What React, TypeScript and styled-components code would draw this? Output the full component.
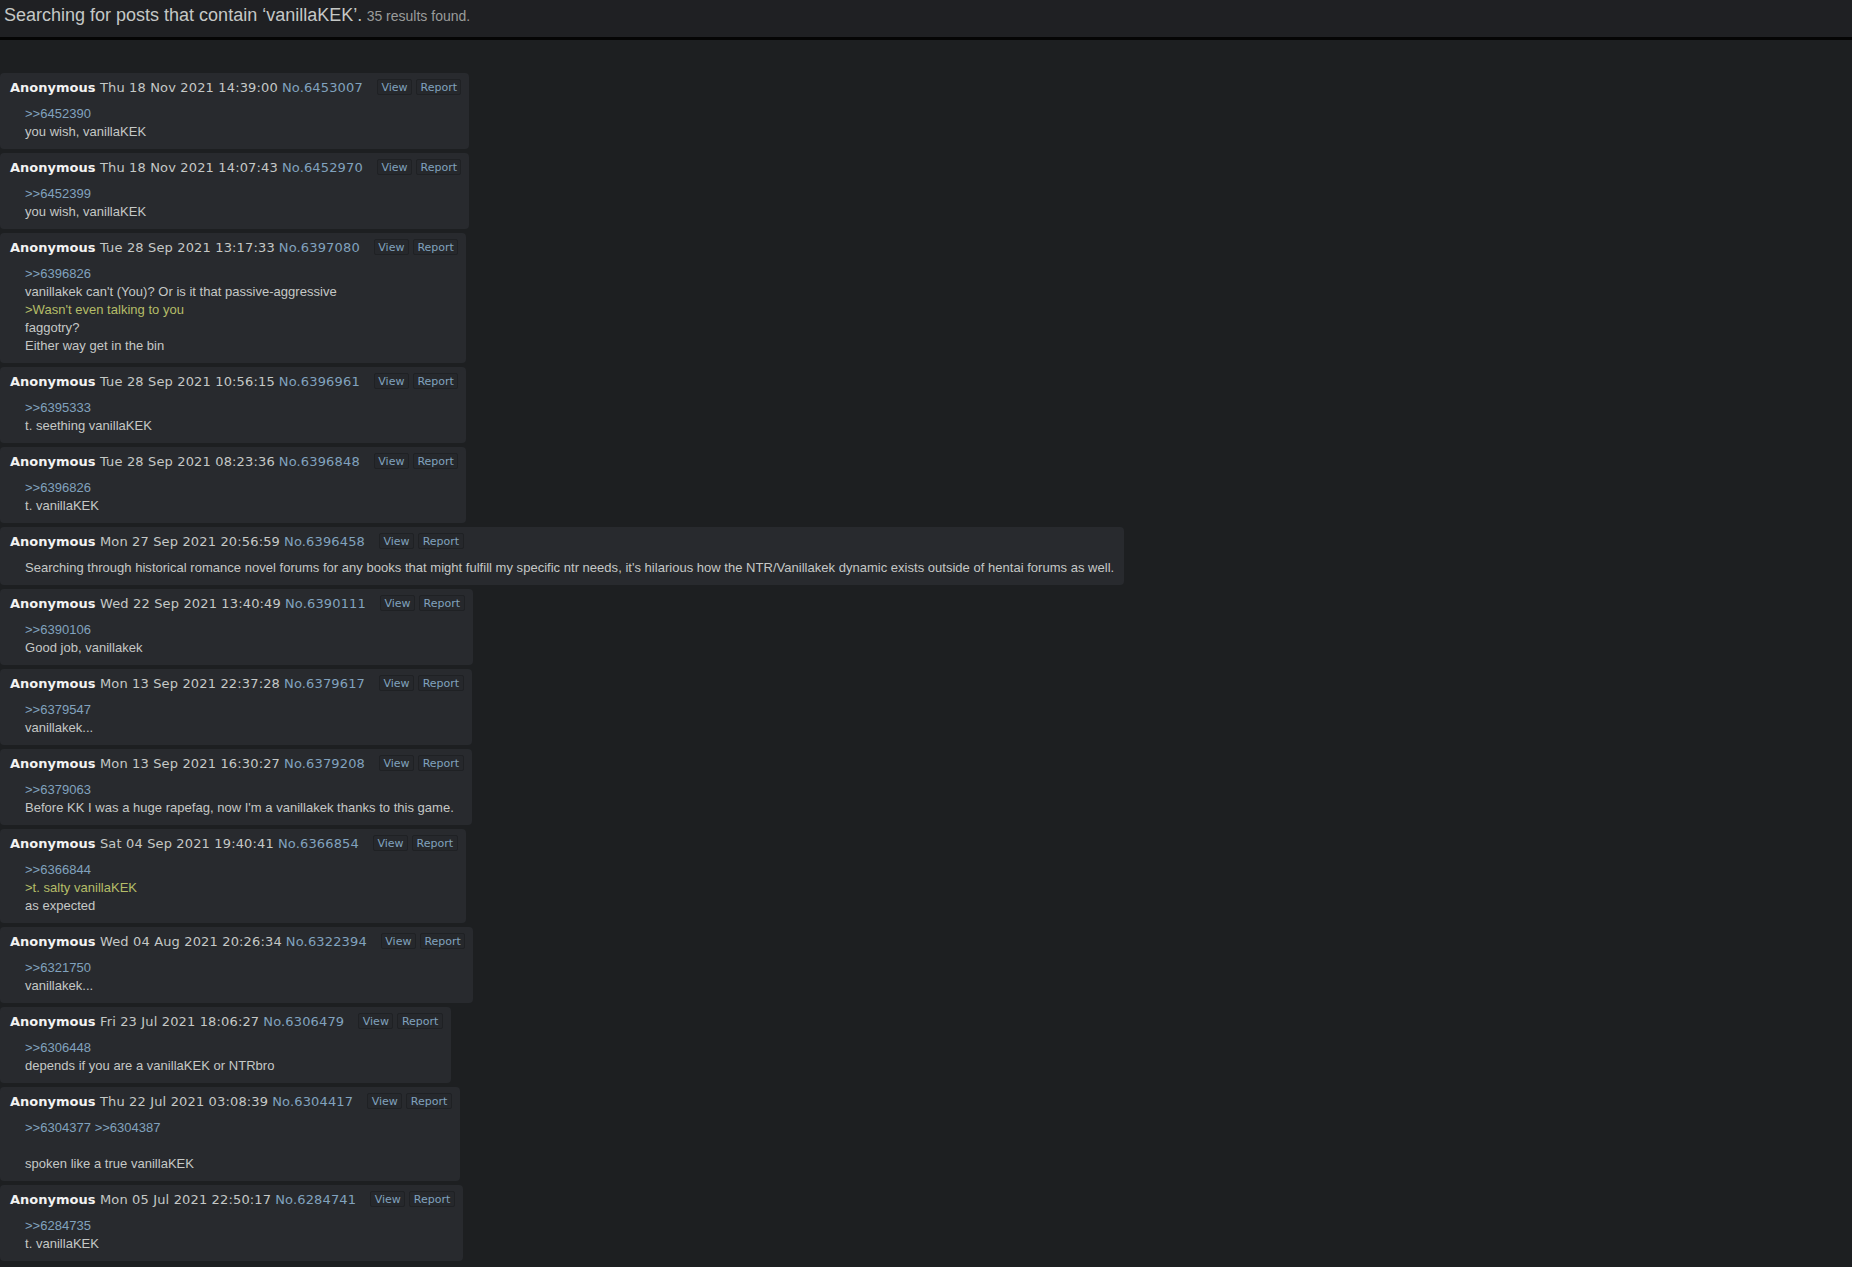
import React from "react";
import styled, { createGlobalStyle } from "styled-components";

const GlobalStyle = createGlobalStyle`
  html, body {
    margin: 0;
    padding: 0;
    background: #1d1f21;
  }
  body {
    font-family: "Liberation Sans", Arial, sans-serif;
    color: #c5c8c6;
  }
`;

const Page = styled.div`
  min-height: 1267px;
  background: #1d1f21;
`;

const TopBar = styled.header`
  height: 40px;
  box-sizing: border-box;
  padding: 5px 4px 0;
  background: #1f2023;
  border-bottom: 3px solid #050505;
  white-space: nowrap;
`;

const Title = styled.span`
  font-family: "Liberation Sans", Arial, sans-serif;
  font-size: 18px;
  color: #c5c8c6;
`;

const Count = styled.span`
  font-family: "Liberation Sans", Arial, sans-serif;
  font-size: 14px;
  color: #9a9c9b;
`;

const PostList = styled.main`
  display: flex;
  flex-direction: column;
  align-items: flex-start;
  gap: 4px;
  padding-top: 33px;
`;

const Post = styled.article`
  background: #282a2e;
  border-radius: 4px;
  padding: 5px 8px 8px 10px;
`;

const PostHeader = styled.div`
  display: flex;
  align-items: center;
  height: 18px;
  font-family: "DejaVu Sans", Verdana, sans-serif;
  font-size: 13px;
  white-space: nowrap;
`;

const Name = styled.span`
  font-weight: bold;
  color: #f2f2f2;
`;

const DateText = styled.span`
  color: #c5c8c6;
  margin-left: 4.5px;
  letter-spacing: 0.15px;
`;

const PostNo = styled.a`
  color: #81a2be;
  text-decoration: none;
  margin-left: 4px;
  letter-spacing: 0.15px;
`;

const Controls = styled.div`
  display: flex;
  gap: 4px;
  margin-left: 14px;
`;

const Btn = styled.a`
  display: inline-flex;
  align-items: center;
  height: 16px;
  box-sizing: border-box;
  padding: 0 3.5px;
  border: 1px solid #1f2124;
  border-radius: 2px;
  background: #26282c;
  color: #81a2be;
  font-family: "DejaVu Sans", Verdana, sans-serif;
  font-size: 11px;
  text-decoration: none;
`;

const Body = styled.div`
  margin: 9px 0 0 15px;
  padding-right: 2px;
  font-family: "Liberation Sans", Arial, sans-serif;
  font-size: 13px;
  line-height: 18px;
  letter-spacing: 0.02px;
  color: #c5c8c6;
  white-space: nowrap;
`;

const Line = styled.div`
  min-height: 18px;
`;

const QuoteLink = styled.a`
  color: #81a2be;
  text-decoration: none;
`;

const Green = styled.span`
  color: #b5bd68;
`;

type PostData = {
  date: string;
  no: string;
  lines: string[];
};

const posts: PostData[] = [
  { date: "Thu 18 Nov 2021 14:39:00", no: "6453007", lines: [">>6452390", "you wish, vanillaKEK"] },
  { date: "Thu 18 Nov 2021 14:07:43", no: "6452970", lines: [">>6452399", "you wish, vanillaKEK"] },
  {
    date: "Tue 28 Sep 2021 13:17:33",
    no: "6397080",
    lines: [
      ">>6396826",
      "vanillakek can't (You)? Or is it that passive-aggressive",
      ">Wasn't even talking to you",
      "faggotry?",
      "Either way get in the bin",
    ],
  },
  { date: "Tue 28 Sep 2021 10:56:15", no: "6396961", lines: [">>6395333", "t. seething vanillaKEK"] },
  { date: "Tue 28 Sep 2021 08:23:36", no: "6396848", lines: [">>6396826", "t. vanillaKEK"] },
  {
    date: "Mon 27 Sep 2021 20:56:59",
    no: "6396458",
    lines: [
      "Searching through historical romance novel forums for any books that might fulfill my specific ntr needs, it's hilarious how the NTR/Vanillakek dynamic exists outside of hentai forums as well.",
    ],
  },
  { date: "Wed 22 Sep 2021 13:40:49", no: "6390111", lines: [">>6390106", "Good job, vanillakek"] },
  { date: "Mon 13 Sep 2021 22:37:28", no: "6379617", lines: [">>6379547", "vanillakek..."] },
  {
    date: "Mon 13 Sep 2021 16:30:27",
    no: "6379208",
    lines: [">>6379063", "Before KK I was a huge rapefag, now I'm a vanillakek thanks to this game."],
  },
  {
    date: "Sat 04 Sep 2021 19:40:41",
    no: "6366854",
    lines: [">>6366844", ">t. salty vanillaKEK", "as expected"],
  },
  { date: "Wed 04 Aug 2021 20:26:34", no: "6322394", lines: [">>6321750", "vanillakek..."] },
  {
    date: "Fri 23 Jul 2021 18:06:27",
    no: "6306479",
    lines: [">>6306448", "depends if you are a vanillaKEK or NTRbro"],
  },
  {
    date: "Thu 22 Jul 2021 03:08:39",
    no: "6304417",
    lines: [">>6304377 >>6304387", "", "spoken like a true vanillaKEK"],
  },
  { date: "Mon 05 Jul 2021 22:50:17", no: "6284741", lines: [">>6284735", "t. vanillaKEK"] },
];

function renderLine(text: string, i: number) {
  if (text.startsWith(">>")) {
    const parts = text.split(" ");
    return (
      <Line key={i}>
        {parts.map((p, j) => (
          <React.Fragment key={j}>
            {j > 0 && " "}
            <QuoteLink href="#">{p}</QuoteLink>
          </React.Fragment>
        ))}
      </Line>
    );
  }
  if (text.startsWith(">")) {
    return (
      <Line key={i}>
        <Green>{text}</Green>
      </Line>
    );
  }
  return <Line key={i}>{text}</Line>;
}

export default function App() {
  return (
    <Page>
      <GlobalStyle />
      <TopBar>
        <Title>Searching for posts that contain ‘vanillaKEK’.</Title> <Count>35 results found.</Count>
      </TopBar>
      <PostList>
        {posts.map((p) => (
          <Post key={p.no}>
            <PostHeader>
              <Name>Anonymous</Name>
              <DateText>{p.date}</DateText>
              <PostNo href="#">No.{p.no}</PostNo>
              <Controls>
                <Btn href="#">View</Btn>
                <Btn href="#">Report</Btn>
              </Controls>
            </PostHeader>
            <Body>{p.lines.map(renderLine)}</Body>
          </Post>
        ))}
      </PostList>
    </Page>
  );
}
